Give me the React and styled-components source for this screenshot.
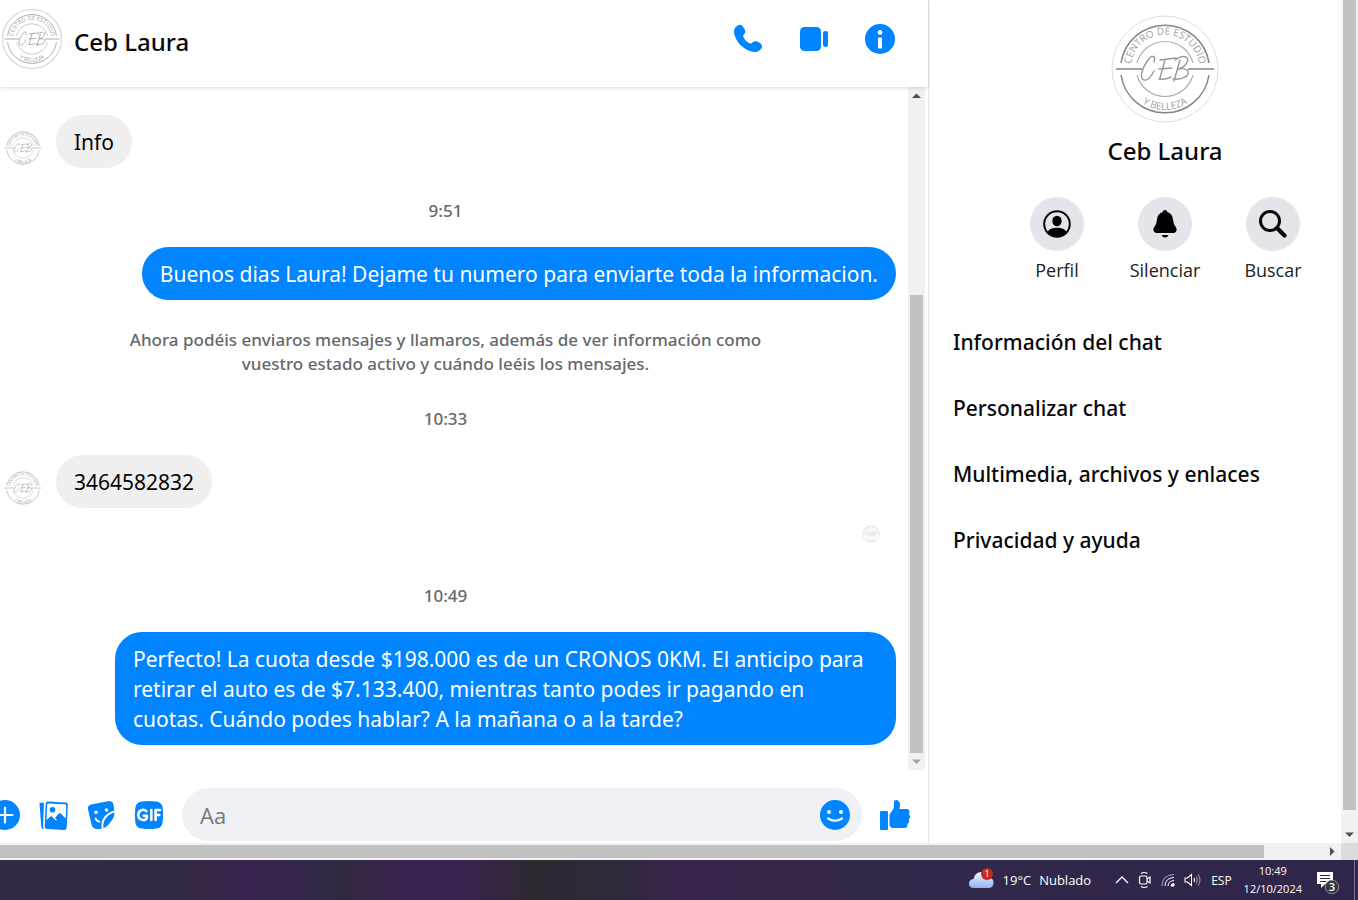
import React from 'react';
import styled, { createGlobalStyle } from 'styled-components';

const colors = {
    accent: '#0084ff',
    text: '#080809',
    muted: '#65686c',
    bubble: '#efefef',
    field: '#f0f1f5',
    circle: '#e4e5ea',
    border: '#e5e5e5',
    track: '#f1f1f1',
    thumb: '#c1c1c1',
};

const GlobalStyle = createGlobalStyle`
  * {
    box-sizing: border-box;
  }
  body {
    margin: 0;
    background: #fff;
    color: ${colors.text};
    font-family: 'Open Sans', 'Noto Sans', sans-serif;
  }
  button {
    border: 0;
    padding: 0;
    background: none;
    color: inherit;
    font: inherit;
    cursor: pointer;
  }
`

const Screen = styled.div`
  display: flex;
  flex-direction: column;
  height: 100vh;
  overflow: hidden;
`

const Viewport = styled.div`
  flex: 1;
  min-height: 0;
  display: grid;
  grid-template-columns: minmax(0, 1fr) 17px;
  grid-template-rows: minmax(0, 1fr) 17px;
`

const Messenger = styled.div`
  display: grid;
  grid-template-columns: minmax(0, 1fr) 412px;
  min-height: 0;
`

const Corner = styled.div`
  background: #dcdcdc;
`

// Scrollbars
const Track = styled.div`
  display: flex;
  flex-direction: ${({ $horizontal }) => $horizontal ? 'row' : 'column'};
  flex: none;
  background: ${colors.track};
  padding: ${({ $horizontal }) => $horizontal ? '2px 0' : '0 2px'};
  ${({ $horizontal }) => $horizontal ? '' : 'width: 17px;'}
`
const Thumb = styled.div`
  flex: ${({ $size }) => $size};
  background: ${colors.thumb};
`
const Rest = styled.div`
  flex: ${({ $size }) => $size};
`
const Arrow = styled.svg`
  display: block;
  flex: none;
  width: ${({ $horizontal }) => $horizontal ? '17px' : '13px'};
  height: ${({ $horizontal }) => $horizontal ? '13px' : '17px'};
`

// Conversation
const Chat = styled.main`
  display: flex;
  flex-direction: column;
  min-height: 0;
  border-right: 1px solid ${colors.border};
`
const Header = styled.header`
  position: relative;
  z-index: 1;
  display: flex;
  align-items: center;
  gap: 12px;
  height: 87px;
  padding: 0 33px 9px 2px;
  background: #fff;
  box-shadow: 0 1px 4px rgba(0, 0, 0, 0.15);
`
const HeaderName = styled.h1`
  flex: 1;
  margin: 0;
  padding-top: 6px;
  font-family: 'Noto Sans', sans-serif;
  font-size: 24px;
  line-height: 32px;
  font-weight: 500;
`
const HeaderActions = styled.div`
  display: flex;
  gap: 36px;
`
const IconButton = styled.button`
  flex: none;
  display: block;
  width: 30px;
  height: 30px;
  & > svg {
    display: block;
    width: 30px;
    height: 30px;
  }
`

const Thread = styled.div`
  flex: 1;
  display: flex;
  min-height: 0;
  padding-right: 3px;
`
const Messages = styled.div`
  flex: 1;
  min-width: 0;
  overflow: hidden;
  padding: 28px 12px 0 3px;
`
const Row = styled.div`
  display: flex;
  align-items: flex-end;
  justify-content: ${({ $own }) => $own ? 'flex-end' : 'flex-start'};
  gap: 13px;
`
const Bubble = styled.p`
  margin: 0;
  max-width: 781px;
  padding: 12px 18px 11px;
  border-radius: 27px;
  background: ${({ $own }) => $own ? colors.accent : colors.bubble};
  color: ${({ $own }) => $own ? '#fff' : colors.text};
  font-family: 'Noto Sans', sans-serif;
  font-size: 21px;
  line-height: 30px;
`
const Timestamp = styled.div`
  padding: 31px 8px 24px 0;
  color: ${colors.muted};
  font-family: 'Noto Sans', sans-serif;
  font-size: 17px;
  line-height: 24px;
  font-weight: 500;
  text-align: center;
`
const Notice = styled.p`
  max-width: 668px;
  margin: 0 auto;
  padding: 28px 8px 0 0;
  color: ${colors.muted};
  font-family: 'Noto Sans', sans-serif;
  font-size: 17px;
  line-height: 24px;
  font-weight: 500;
  text-align: center;
`
const Receipt = styled.div`
  display: flex;
  justify-content: flex-end;
  padding: 16px 15px 9px 0;
`

const Composer = styled.form`
  display: flex;
  align-items: center;
  gap: 18px;
  overflow: hidden;
  padding: 18px 18px 2px 0;
  & > button:first-child {
    margin-left: -10px;
  }
`
const Field = styled.label`
  flex: 1;
  display: flex;
  align-items: center;
  min-width: 0;
  height: 53px;
  padding: 0 12px 0 16px;
  border-radius: 27px;
  background: ${colors.field};
`
const FieldInput = styled.input`
  flex: 1;
  min-width: 0;
  border: 0;
  outline: 0;
  background: none;
  font: inherit;
  font-size: 22px;
  line-height: 30px;
  color: ${colors.text};
  &::placeholder {
    color: #74777c;
    opacity: 1;
  }
`

// Details panel
const Details = styled.aside`
  min-height: 0;
  overflow: hidden;
  background: #fff;
`
// the panel runs on past the right edge of the window
const DetailsInner = styled.div`
  margin-right: -60px;
  padding-top: 15px;
`
const Profile = styled.div`
  display: flex;
  flex-direction: column;
  align-items: center;
`
const ProfileName = styled.h2`
  margin: 0;
  padding: 12px 0 30px;
  font-family: 'Noto Sans', sans-serif;
  font-size: 24px;
  line-height: 32px;
  font-weight: 500;
`
const Actions = styled.div`
  display: flex;
  justify-content: center;
`
const Action = styled.button`
  display: flex;
  flex-direction: column;
  align-items: center;
  gap: 6px;
  width: 108px;
  color: #222;
  font-size: 18px;
  line-height: 26px;
`
const ActionCircle = styled.span`
  display: flex;
  align-items: center;
  justify-content: center;
  width: 54px;
  height: 54px;
  border-radius: 50%;
  background: ${colors.circle};
`
const Menu = styled.nav`
  display: flex;
  flex-direction: column;
  padding: 26px 24px 0;
`
const MenuItem = styled.button`
  height: 66px;
  font-family: 'Noto Sans', sans-serif;
  font-size: 21px;
  font-weight: 500;
  text-align: left;
`

// Taskbar
const Taskbar = styled.footer`
  display: flex;
  align-items: center;
  justify-content: flex-end;
  flex: none;
  height: 40px;
  padding-right: 3px;
  background: linear-gradient(90deg, #332a43 0%, #342944 14%, #382450 18%, #33284a 23%, #31293f 25%, #3a2352 30%, #3a2352 34%, #2f2830 39%, #2f2838 45%, #38254f 50%, #362648 56%, #32284a 66%, #30254a 100%);
  color: #fff;
  font-size: 13px;
`
const Weather = styled.div`
  display: flex;
  align-items: center;
  gap: 8px;
  padding-right: 24px;
`
const Tray = styled.div`
  display: flex;
  align-items: center;
  gap: 9px;
  font-size: 12px;
`
const Clock = styled.div`
  padding: 0 14px 0 12px;
  font-size: 11px;
  line-height: 18px;
  text-align: center;
`
const Notifications = styled.button`
  display: block;
  height: 28px;
  margin-right: 12px;
`
const Peek = styled.div`
  align-self: stretch;
  width: 1px;
  background: #77708a;
`

const Logo = ({ size, faded, rim }) => (
    <svg width={size} height={size} viewBox="0 0 108 108" role="img" aria-label="Ceb Laura" opacity={faded ? 0.8 : 1} style={{ display: 'block', flex: 'none' }}>
        <defs>
            <path id={`top${size}`} d="M20 60 A34.5 34.5 0 1 1 88 60" />
            <path id={`bottom${size}`} d="M13 54 A41 41 0 0 0 95 54" />
        </defs>
        {rim && <circle cx="54" cy="54" r="53" fill="#fff" stroke="#dcdcdc" strokeWidth={size > 80 ? 1 : 2.5} />}
        <g fill="none" stroke={size > 80 ? '#858585' : '#9c9c9c'}>
            <path strokeWidth="1.5" d="M10 48 A44.5 44.5 0 0 1 98 48 M10 60 A44.5 44.5 0 0 0 98 60" />
            <path strokeWidth="1.1" stroke="#aaa" d="M26 48 A29 29 0 0 1 82 48 M26 60 A29 29 0 0 0 82 60" />
            <path strokeWidth="1.5" d="M5 54 H31 M77 54 H103" />
            <path strokeWidth="1.4" strokeLinecap="round" strokeLinejoin="round" stroke="#999" d="M43 47 C45 41 41 39 37 45 C31 53 28 64 33 65 C37 66 41 60 43 56 M49 45 L65 43 M54 45 L49 63 M48 54 L61 53 M48 64 Q54 65 60 62 M69 45 L63 66 M64 45 C74 38 80 43 75 49 Q72 53 67 54 C78 52 80 59 74 62 Q69 65 62 64" />
        </g>
        <g fill="#a0a0a0" fontSize="10" fontFamily="'Open Sans', sans-serif">
            <text textAnchor="middle"><textPath href={`#top${size}`} startOffset="50%">CENTRO DE ESTUDIO</textPath></text>
            <text textAnchor="middle"><textPath href={`#bottom${size}`} startOffset="50%">Y BELLEZA</textPath></text>
        </g>
    </svg>
)

const PhoneIcon = () => (
    <svg viewBox="0 0 30 30" fill={colors.accent}>
        <path d="M5.200 1.200 C6.500 .4 8.200 .5 9.200 1.700 C10.500 3.200 11.700 5 12.200 6.800 C12.600 8.300 12 9.200 11 10.300 C10.300 11.100 10 11.800 10.400 12.900 C11.600 15.700 14 18.100 16.600 19.300 C17.600 19.800 18.300 19.500 19 18.800 C20.300 17.500 21.500 16.800 23.400 17.300 C25 17.700 26.600 18.700 28 19.900 C29.200 21 29.300 22.800 28.500 24.200 C27 26.700 24.400 28.100 21.400 27.900 C10.500 26.800 1.200 16.500 1 7.200 C1 4.600 2.600 2.500 5.200 1.200 Z" />
    </svg>
)
const VideoIcon = () => (
    <svg viewBox="0 0 30 30" fill={colors.accent}>
        <rect x="1" y="3" width="21" height="24" rx="4.5" />
        <rect x="24" y="7" width="5" height="16" rx="2.2" />
    </svg>
)
const InfoIcon = () => (
    <svg viewBox="0 0 30 30">
        <circle cx="15" cy="15" r="15" fill={colors.accent} />
        <circle cx="15" cy="8.5" r="2.4" fill="#fff" />
        <rect x="13" y="13.5" width="4" height="11" rx="1" fill="#fff" />
    </svg>
)
const PlusIcon = () => (
    <svg viewBox="0 0 30 30">
        <circle cx="15" cy="15" r="15" fill={colors.accent} />
        <path d="M15 7.500 V22.500 M7.500 15 H22.500" stroke="#fff" strokeWidth="2.2" strokeLinecap="round" />
    </svg>
)
const GalleryIcon = () => (
    <svg viewBox="0 0 30 30" fill={colors.accent}>
        <path d="M1.500 3.500 Q1.500 2.800 2.500 2.800 H6 L5.100 26 Q5 27.500 6 29 L4.800 28.800 Q3.500 28.500 3.300 27 Z" />
        <path d="M9.800 1.500 L27.500 2.500 Q30 2.700 29.900 5.200 L28.700 27.200 Q28.500 30 25.800 29.900 L9.300 29 Q6.600 28.800 6.700 26.200 L7.700 3.700 Q7.900 1.400 9.800 1.500 Z" />
        <path fill="#fff" d="M10.500 3.400 L26.800 4.200 Q28.400 4.300 28.300 5.900 L27.700 18.500 L22.500 13.300 Q21.600 12.500 20.800 13.500 L17 18 L19 20 Q18 20.800 17 19.800 L14 16.600 Q13 15.700 12 16.700 L8.600 20.200 L9.100 4.800 Q9.200 3.400 10.500 3.400 Z" />
        <circle cx="14.5" cy="9.7" r="2.8" />
    </svg>
)
const StickerIcon = () => (
    <svg viewBox="0 0 30 30">
        <path fill={colors.accent} d="M5 4.500 L22 1.200 Q26.700 .5 27.600 5 L28.200 10.500 Q21 12.500 17.300 18.300 Q14.800 22.300 15.800 28.700 L12 29 Q7 29.600 5.700 25 L2 9.500 Q1.200 5.500 5 4.500 Z" />
        <path fill={colors.accent} d="M28.300 12.600 Q28.800 17 25.300 21 Q21.500 26.500 17.500 28.300 Q16.800 23 19 19.400 Q22.500 14.300 28.300 12.600 Z" />
        <circle cx="10" cy="12.3" r="1.8" fill="#fff" />
        <circle cx="20.5" cy="10" r="1.8" fill="#fff" />
        <path d="M9.500 18.500 Q11 21.500 13.500 21.600" fill="none" stroke="#fff" strokeWidth="1.8" strokeLinecap="round" />
    </svg>
)
const GifIcon = () => (
    <svg viewBox="0 0 30 30">
        <path fill={colors.accent} d="M8 1.500 Q15 .5 22 1.500 Q28 2 28.700 8 Q29.600 15 28.700 22 Q28 28 22 28.500 Q15 29.500 8 28.500 Q2 28 1.300 22 Q.4 15 1.300 8 Q2 2 8 1.500 Z" />
        <path fill="none" stroke="#fff" strokeWidth="2.6" strokeLinecap="round" strokeLinejoin="round" d="M12.300 11.200 C9.500 8.200 4.300 10.500 4.300 15 C4.300 20.500 11.500 21.500 13 17.500 V15.800 H9.700 M17.300 10 V20 M21.600 20 V10 H26 M21.600 15 H25.300" />
    </svg>
)
const SmileIcon = () => (
    <svg viewBox="0 0 30 30">
        <circle cx="15" cy="15" r="15" fill={colors.accent} />
        <circle cx="9" cy="12" r="2" fill="#fff" />
        <circle cx="21" cy="12" r="2" fill="#fff" />
        <path d="M8 18.500 Q15 23 22 18.500" fill="none" stroke="#fff" strokeWidth="2.2" strokeLinecap="round" />
    </svg>
)
const LikeIcon = () => (
    <svg viewBox="0 0 30 30" fill={colors.accent}>
        <rect x="0" y="11" width="8" height="19" rx="1" />
        <path d="M14 2 Q14 0 16.200 0 Q20 .5 20 5 Q20 7 19.300 9 H27 Q29.700 9.300 29.500 12 Q29.300 13.500 28.700 14 Q30.700 15.600 29.800 17.800 Q29.500 18.800 28.700 19.300 Q29.800 21 28.500 23 Q28.200 23.600 27.500 24 Q28 28 24.500 28 H13.500 Q9.500 28 9.500 24 V15.500 Q9.600 13.500 11.200 12 Q14 9.500 14 6.500 Z" />
    </svg>
)

const PersonIcon = () => (
    <svg width="28" height="28" viewBox="0 0 28 28">
        <circle cx="14" cy="14" r="12.8" fill="none" stroke="#080809" strokeWidth="2" />
        <ellipse cx="14" cy="11" rx="4.700" ry="5.200" />
        <path d="M4.500 22 Q7 17.800 14 17.800 Q21 17.800 23.500 22 Q19.500 26.600 14 26.600 Q8.500 26.600 4.500 22 Z" />
    </svg>
)
const BellIcon = () => (
    <svg width="28" height="28" viewBox="0 0 28 28">
        <path d="M14 0 Q16 0 16.400 2 Q21.800 3.800 22.200 10.500 Q22.400 14.500 24.600 16.800 Q26.300 19 25.300 21.300 Q24.500 23 22.500 23 H5.500 Q3.500 23 2.700 21.300 Q1.700 19 3.400 16.800 Q5.600 14.500 5.800 10.500 Q6.200 3.800 11.600 2 Q12 0 14 0 Z M10.500 25 H17.500 Q16.500 27.600 14 27.600 Q11.500 27.600 10.500 25 Z" />
    </svg>
)
const SearchIcon = () => (
    <svg width="28" height="28" viewBox="0 0 28 28" fill="none" stroke="#080809">
        <circle cx="11" cy="11" r="9.5" strokeWidth="3" />
        <path d="M18 18 L25.500 25.500" strokeWidth="4.2" strokeLinecap="round" />
    </svg>
)

const CloudIcon = () => (
    <svg width="26" height="24" viewBox="0 0 26 24">
        <defs>
            <linearGradient id="cloud" x1="0" y1="0" x2="0" y2="1">
                <stop offset="0" stopColor="#f2f7ff" />
                <stop offset="1" stopColor="#8fb3ee" />
            </linearGradient>
        </defs>
        <path fill="url(#cloud)" d="M5 20 Q0 20 0 15.500 Q0 11.500 4.500 11 Q6 4 12.500 4 Q18 4 20 10 Q25 10.500 24.500 15 Q24.300 20 19.500 20 Z" />
        <circle cx="18" cy="6" r="6" fill="#c42b1c" />
        <text x="18" y="9" fill="#fff" fontSize="9" textAnchor="middle">1</text>
    </svg>
)
const ChevronIcon = () => (
    <svg width="14" height="14" viewBox="0 0 14 14" fill="none" stroke="#fff" strokeWidth="1.3">
        <path d="M1 10 L7 4 L13 10" />
    </svg>
)
const MeetIcon = () => (
    <svg width="14" height="18" viewBox="0 0 14 18" fill="none" stroke="#fff" strokeWidth="1.2">
        <rect x="1.5" y="5" width="7.5" height="8" rx="1.5" />
        <path d="M9 8 L12 6 V12 L9 10 M3 2.500 Q6 .5 9.500 2.500 M3 15.500 Q6 17.500 9.500 15.500" />
    </svg>
)
const WifiIcon = () => (
    <svg width="14" height="14" viewBox="0 0 14 14" fill="none" stroke="#fff" strokeWidth="1">
        <path d="M1 13 Q1 2 13 1.500" opacity=".6" />
        <path d="M4 13 Q4.200 5 13 4.500 M7 13 Q7.200 8 13 7.500" />
        <path d="M10 13 Q10 10.500 13 10.500 V13 Z" fill="#fff" />
    </svg>
)
const VolumeIcon = () => (
    <svg width="18" height="14" viewBox="0 0 18 14" fill="none" stroke="#fff" strokeWidth="1.1">
        <path d="M1 5 H3.500 L7.500 1.500 V12.500 L3.500 9 H1 Z M10 5 Q11.300 7 10 9" />
        <path d="M12 3.500 Q14.500 7 12 10.500 M14 1.500 Q18 7 14 12.500" opacity=".5" />
    </svg>
)
const NoticeIcon = () => (
    <svg width="26" height="28" viewBox="0 0 26 28">
        <path fill="#fff" d="M1 6 H17 V18 H9 L5 22 V18 H1 Z" />
        <path stroke="#30254a" strokeWidth="1.2" d="M4 9.500 H14 M4 12.500 H14 M4 15.500 H10" />
        <circle cx="16" cy="21" r="6.8" fill="#38383c" stroke="#8d8a96" />
        <text x="16" y="25" fill="#fff" fontSize="11" fontWeight="600" textAnchor="middle">3</text>
    </svg>
)

const arrowPaths = {
    up: 'M2 11 L6.500 6.500 L11 11 Z',
    down: 'M2 6.500 L6.500 11 L11 6.500 Z',
    right: 'M6 2 L10.500 6.500 L6 11 Z',
};

const ScrollArrow = ({ direction, color = '#505050' }) => {
    const horizontal = direction === 'right';
    return (
        <Arrow $horizontal={horizontal} viewBox={horizontal ? '0 0 17 13' : '0 0 13 17'} fill={color}>
            <path d={arrowPaths[direction]} />
        </Arrow>
    )
}

const headerActions = [
    { label: 'Llamar', Icon: PhoneIcon },
    { label: 'Videollamada', Icon: VideoIcon },
    { label: 'Información', Icon: InfoIcon },
]

const composerActions = [
    { label: 'Más acciones', Icon: PlusIcon },
    { label: 'Adjuntar foto', Icon: GalleryIcon },
    { label: 'Stickers', Icon: StickerIcon },
    { label: 'GIF', Icon: GifIcon },
]

const profileActions = [
    { label: 'Perfil', Icon: PersonIcon },
    { label: 'Silenciar', Icon: BellIcon },
    { label: 'Buscar', Icon: SearchIcon },
]

const menuItems = [
    'Información del chat',
    'Personalizar chat',
    'Multimedia, archivos y enlaces',
    'Privacidad y ayuda',
]

const thread = [
    { type: 'message', text: 'Info' },
    { type: 'time', text: '9:51' },
    { type: 'message', own: true, text: 'Buenos dias Laura! Dejame tu numero para enviarte toda la informacion.' },
    { type: 'notice', text: 'Ahora podéis enviaros mensajes y llamaros, además de ver información como vuestro estado activo y cuándo leéis los mensajes.' },
    { type: 'time', text: '10:33' },
    { type: 'message', text: '3464582832' },
    { type: 'receipt' },
    { type: 'time', text: '10:49' },
    { type: 'message', own: true, text: 'Perfecto! La cuota desde $198.000 es de un CRONOS 0KM. El anticipo para retirar el auto es de $7.133.400, mientras tanto podes ir pagando en cuotas. Cuándo podes hablar? A la mañana o a la tarde?' },
]

const ThreadItem = ({ item }) => {
    const { type, own, text } = item;
    if (type === 'time') return <Timestamp>{text}</Timestamp>
    if (type === 'notice') return <Notice>{text}</Notice>
    if (type === 'receipt') return <Receipt><Logo size={20} faded /></Receipt>
    return (
        <Row $own={own}>
            {!own && <Logo size={40} />}
            <Bubble $own={own}>{text}</Bubble>
        </Row>
    )
}

const Conversation = () => (
    <Chat>
        <Header>
            <Logo size={60} rim />
            <HeaderName>Ceb Laura</HeaderName>
            <HeaderActions>
                {headerActions.map(({ label, Icon }) => (
                    <IconButton key={label} aria-label={label}><Icon /></IconButton>
                ))}
            </HeaderActions>
        </Header>
        <Thread>
            <Messages>
                {thread.map((item, index) => <ThreadItem key={index} item={item} />)}
            </Messages>
            <Track>
                <ScrollArrow direction="up" />
                <Rest $size={191} />
                <Thumb $size={458} />
                <ScrollArrow direction="down" color="#a3a3a3" />
            </Track>
        </Thread>
        <Composer onSubmit={(e) => e.preventDefault()}>
            {composerActions.map(({ label, Icon }) => (
                <IconButton type="button" key={label} aria-label={label}><Icon /></IconButton>
            ))}
            <Field>
                <FieldInput type="text" placeholder="Aa" aria-label="Mensaje" />
                <IconButton type="button" aria-label="Emoji"><SmileIcon /></IconButton>
            </Field>
            <IconButton type="button" aria-label="Me gusta"><LikeIcon /></IconButton>
        </Composer>
    </Chat>
)

const DetailsPanel = () => (
    <Details>
        <DetailsInner>
            <Profile>
                <Logo size={108} rim />
                <ProfileName>Ceb Laura</ProfileName>
            </Profile>
            <Actions>
                {profileActions.map(({ label, Icon }) => (
                    <Action key={label}>
                        <ActionCircle><Icon /></ActionCircle>
                        {label}
                    </Action>
                ))}
            </Actions>
            <Menu>
                {menuItems.map((item) => <MenuItem key={item}>{item}</MenuItem>)}
            </Menu>
        </DetailsInner>
    </Details>
)

const App = () => {
    return (
        <Screen>
            <GlobalStyle />
            <Viewport>
                <Messenger>
                    <Conversation />
                    <DetailsPanel />
                </Messenger>
                <Track>
                    <Thumb $size={810} />
                    <Rest $size={16} />
                    <ScrollArrow direction="down" />
                </Track>
                <Track $horizontal>
                    <Thumb $size={1264} />
                    <Rest $size={60} />
                    <ScrollArrow direction="right" />
                </Track>
                <Corner />
            </Viewport>
            <Taskbar>
                <Weather>
                    <CloudIcon />
                    <span>19°C</span>
                    <span>Nublado</span>
                </Weather>
                <Tray>
                    <ChevronIcon />
                    <MeetIcon />
                    <WifiIcon />
                    <VolumeIcon />
                    <span>ESP</span>
                </Tray>
                <Clock>
                    <div>10:49</div>
                    <div>12/10/2024</div>
                </Clock>
                <Notifications aria-label="Notificaciones"><NoticeIcon /></Notifications>
                <Peek />
            </Taskbar>
        </Screen>
    )
}

export default App;
